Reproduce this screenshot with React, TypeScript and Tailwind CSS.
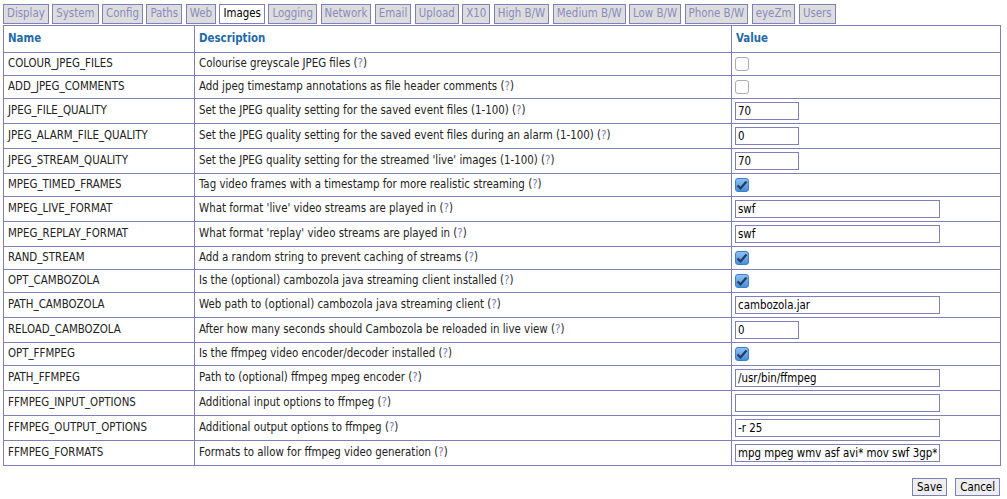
import React from "react";

type Row = {
  name: string;
  desc: string;
  kind: "off" | "on" | "small" | "wide";
  value?: string;
};

const tabs = [
  "Display",
  "System",
  "Config",
  "Paths",
  "Web",
  "Images",
  "Logging",
  "Network",
  "Email",
  "Upload",
  "X10",
  "High B/W",
  "Medium B/W",
  "Low B/W",
  "Phone B/W",
  "eyeZm",
  "Users",
];

const rows: Row[] = [
  { name: "COLOUR_JPEG_FILES", desc: "Colourise greyscale JPEG files", kind: "off" },
  { name: "ADD_JPEG_COMMENTS", desc: "Add jpeg timestamp annotations as file header comments", kind: "off" },
  { name: "JPEG_FILE_QUALITY", desc: "Set the JPEG quality setting for the saved event files (1-100)", kind: "small", value: "70" },
  { name: "JPEG_ALARM_FILE_QUALITY", desc: "Set the JPEG quality setting for the saved event files during an alarm (1-100)", kind: "small", value: "0" },
  { name: "JPEG_STREAM_QUALITY", desc: "Set the JPEG quality setting for the streamed 'live' images (1-100)", kind: "small", value: "70" },
  { name: "MPEG_TIMED_FRAMES", desc: "Tag video frames with a timestamp for more realistic streaming", kind: "on" },
  { name: "MPEG_LIVE_FORMAT", desc: "What format 'live' video streams are played in", kind: "wide", value: "swf" },
  { name: "MPEG_REPLAY_FORMAT", desc: "What format 'replay' video streams are played in", kind: "wide", value: "swf" },
  { name: "RAND_STREAM", desc: "Add a random string to prevent caching of streams", kind: "on" },
  { name: "OPT_CAMBOZOLA", desc: "Is the (optional) cambozola java streaming client installed", kind: "on" },
  { name: "PATH_CAMBOZOLA", desc: "Web path to (optional) cambozola java streaming client", kind: "wide", value: "cambozola.jar" },
  { name: "RELOAD_CAMBOZOLA", desc: "After how many seconds should Cambozola be reloaded in live view", kind: "small", value: "0" },
  { name: "OPT_FFMPEG", desc: "Is the ffmpeg video encoder/decoder installed", kind: "on" },
  { name: "PATH_FFMPEG", desc: "Path to (optional) ffmpeg mpeg encoder", kind: "wide", value: "/usr/bin/ffmpeg" },
  { name: "FFMPEG_INPUT_OPTIONS", desc: "Additional input options to ffmpeg", kind: "wide", value: "" },
  { name: "FFMPEG_OUTPUT_OPTIONS", desc: "Additional output options to ffmpeg", kind: "wide", value: "-r 25" },
  { name: "FFMPEG_FORMATS", desc: "Formats to allow for ffmpeg video generation", kind: "wide", value: "mpg mpeg wmv asf avi* mov swf 3gp**" },
];

function Check({ on }: { on: boolean }) {
  if (!on) {
    return (
      <span className="block h-[14px] w-[14px] rounded-[3px] border border-[#acacac] bg-white" />
    );
  }
  return (
    <span className="flex h-[14px] w-[14px] items-center justify-center rounded-[3px] border border-[#3b7fd0] bg-gradient-to-b from-[#8cc0f2] to-[#4a8fdc]">
      <svg width="12" height="11" viewBox="0 0 12 11">
        <path d="M1.5 5.5 L4.5 8.5 L10.5 1.5" fill="none" stroke="#243a5e" strokeWidth="2.2" />
      </svg>
    </span>
  );
}

function ValueCell({ row }: { row: Row }) {
  if (row.kind === "off" || row.kind === "on") return <Check on={row.kind === "on"} />;
  return (
    <input
      readOnly
      value={row.value}
      className={`h-[18px] border border-[#8080b8] bg-white px-[2px] text-[11.4px] text-black outline-none ${
        row.kind === "small" ? "w-[64px]" : "w-[205px]"
      }`}
    />
  );
}

export default function App() {
  return (
    <div className="h-[499px] w-[1007px] bg-white pl-[3px] pt-[4px] font-['DejaVu_Sans_Condensed','DejaVu_Sans',sans-serif] text-[11.4px] text-[#222]">
      <div className="mb-[1px] flex gap-[3.5px]">
        {tabs.map((t) => (
          <div
            key={t}
            className={`flex h-[20px] items-center border border-[#8080b8] px-[3px] ${
              t === "Images" ? "bg-white text-black" : "bg-[#dddddd] text-[#8a8abf]"
            }`}
          >
            {t}
          </div>
        ))}
      </div>
      <table className="w-[997px] table-fixed border-collapse border border-[#8080b8]">
        <colgroup>
          <col className="w-[191px]" />
          <col className="w-[537px]" />
          <col className="w-[269px]" />
        </colgroup>
        <thead>
          <tr>
            {["Name", "Description", "Value"].map((h) => (
              <th key={h} className="border border-[#8080b8] p-0 text-left">
                <div className="flex h-[26px] items-center px-[4px] font-bold text-[#1f6aa8]">{h}</div>
              </th>
            ))}
          </tr>
        </thead>
        <tbody>
          {rows.map((r) => {
            const tall = r.kind === "small" || r.kind === "wide";
            const h = tall ? "h-[24px]" : "h-[22px]";
            return (
              <tr key={r.name}>
                <td className="border border-[#8080b8] p-0">
                  <div className={`flex ${h} items-center px-[4px]`}>{r.name}</div>
                </td>
                <td className="border border-[#8080b8] p-0">
                  <div className={`flex ${h} items-center px-[4px] whitespace-nowrap`}>
                    {r.desc}&nbsp;(<span className="text-[#7a7ab8]">?</span>)
                  </div>
                </td>
                <td className="border border-[#8080b8] p-0">
                  <div className={`flex ${h} items-center px-[3px]`}>
                    <ValueCell row={r} />
                  </div>
                </td>
              </tr>
            );
          })}
        </tbody>
      </table>
      <div className="mt-[12px] flex justify-end gap-[8px] pr-[7px]">
        <button className="h-[18px] border border-[#8080b8] bg-[#eeeeee] px-[4px] text-[11.4px] text-black">Save</button>
        <button className="h-[18px] border border-[#8080b8] bg-[#eeeeee] px-[4px] text-[11.4px] text-black">Cancel</button>
      </div>
    </div>
  );
}
